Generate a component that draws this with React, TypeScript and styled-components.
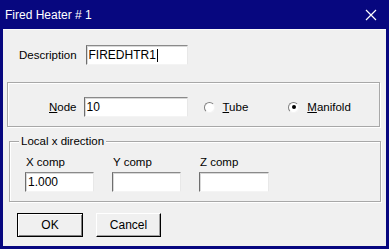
import React from 'react';
import styled, { createGlobalStyle } from 'styled-components';

const GlobalStyle = createGlobalStyle`
  html, body {
    margin: 0;
    padding: 0;
    background: #f0f0f0;
  }
  body {
    font-family: 'Liberation Sans', Arial, sans-serif;
    font-size: 11.5px;
    color: #000;
  }
`;

const Window = styled.div`
  width: 389px;
  height: 249px;
  display: flex;
  flex-direction: column;
  background: #07077f;
  box-sizing: border-box;
`;

const TitleBar = styled.div`
  height: 29px;
  flex: none;
  display: flex;
  align-items: center;
  justify-content: space-between;
  padding: 0 12px 0 5px;
  color: #fff;
  font-size: 12px;
`;

const Client = styled.div`
  flex: 1;
  margin: 0 3px 3px 3px;
  background: #f0f0f0;
  border-top: 1px solid #fafafa;
  display: flex;
  flex-direction: column;
  padding: 15px 6px 0 4px;
`;

const Row = styled.div<{ $indent?: number }>`
  display: flex;
  align-items: center;
  padding-left: ${({ $indent }) => $indent ?? 0}px;
`;

const Label = styled.span<{ $gap?: number }>`
  margin-right: ${({ $gap }) => $gap ?? 7}px;
  white-space: nowrap;
`;

const Field = styled.div<{ $w: number }>`
  width: ${({ $w }) => $w}px;
  height: 20px;
  box-sizing: border-box;
  background: #fff;
  border-top: 1px solid #8a8a8a;
  border-left: 1px solid #6e6e6e;
  border-right: 1px solid #e8e8e8;
  border-bottom: 1px solid #f4f4f4;
  box-shadow: inset 1px 1px 0 #d8d8d8;
  display: flex;
  align-items: center;
  padding-left: 2px;
  font-size: 12px;
`;

const Caret = styled.span`
  display: inline-block;
  width: 1px;
  height: 13px;
  background: #000;
  margin-left: 1px;
`;

const GroupBox = styled.div<{ $mt: number; $ml: number; $mr?: number }>`
  position: relative;
  margin-top: ${({ $mt }) => $mt}px;
  margin-left: ${({ $ml }) => $ml}px;
  margin-right: ${({ $mr }) => $mr ?? 0}px;
  border: 1px solid #a8a8a8;
  box-shadow: inset 1px 1px 0 #fff, 1px 1px 0 #fff;
`;

const NodeBody = styled.div`
  display: flex;
  align-items: center;
  padding: 14px 0 9px 41px;
`;

const Legend = styled.span`
  position: absolute;
  top: -8px;
  left: 9px;
  padding: 0 2px;
  background: #f0f0f0;
  line-height: 15px;
`;

const Radio = styled.label<{ $ml: number }>`
  display: flex;
  align-items: center;
  margin-left: ${({ $ml }) => $ml}px;
  gap: 8px;
`;

const RadioCircle = styled.span<{ $checked?: boolean }>`
  width: 11px;
  height: 11px;
  box-sizing: border-box;
  border-radius: 50%;
  border: 1px solid;
  border-color: #808080 #f4f4f4 #f4f4f4 #808080;
  background: #fff;
  display: flex;
  align-items: center;
  justify-content: center;
  &::after {
    content: '';
    width: 4px;
    height: 4px;
    border-radius: 50%;
    background: ${({ $checked }) => ($checked ? '#000' : 'transparent')};
  }
`;

const U = styled.span`
  text-decoration: underline;
`;

const CompGrid = styled.div`
  display: flex;
  gap: 18px;
  padding: 13px 0 9px 15px;
`;

const CompCol = styled.div`
  display: flex;
  flex-direction: column;
  gap: 3px;
`;

const CompLabel = styled.span`
  padding-left: 1px;
  line-height: 14px;
`;

const Buttons = styled.div`
  display: flex;
  gap: 13px;
  margin-top: 11px;
  padding-left: 10px;
`;

const Button = styled.div<{ $default?: boolean; $w: number }>`
  width: ${({ $w }) => $w}px;
  height: 24px;
  box-sizing: border-box;
  display: flex;
  align-items: center;
  justify-content: center;
  background: #f0f0f0;
  border: 1px solid ${({ $default }) => ($default ? '#000' : '#fff')};
  border-right-color: #000;
  border-bottom-color: #000;
  box-shadow: ${({ $default }) =>
    $default
      ? 'inset 1px 1px 0 #fff, inset -1px -1px 0 #808080'
      : 'inset -1px -1px 0 #a0a0a0'};
  font-size: 12px;
`;

const CloseIcon = () => (
  <svg width="12" height="12" viewBox="0 0 12 12">
    <path d="M1 1 L11 11 M11 1 L1 11" stroke="#fff" strokeWidth="1.2" />
  </svg>
);

export default function App() {
  return (
    <>
      <GlobalStyle />
      <Window>
        <TitleBar>
          <span>Fired Heater # 1</span>
          <CloseIcon />
        </TitleBar>
        <Client>
          <Row $indent={12}>
            <Label $gap={9}>Description</Label>
            <Field $w={102}>
              FIREDHTR1
              <Caret />
            </Field>
          </Row>

          <GroupBox $mt={17} $ml={0}>
            <NodeBody>
              <Label>
                <U>N</U>ode
              </Label>
              <Field $w={104}>10</Field>
              <Radio $ml={16}>
                <RadioCircle />
                <span>
                  <U>T</U>ube
                </span>
              </Radio>
              <Radio $ml={40}>
                <RadioCircle $checked />
                <span>
                  <U>M</U>anifold
                </span>
              </Radio>
            </NodeBody>
          </GroupBox>

          <GroupBox $mt={14} $ml={2} $mr={-1}>
            <Legend>Local x direction</Legend>
            <CompGrid>
              <CompCol>
                <CompLabel>X comp</CompLabel>
                <Field $w={69}>1.000</Field>
              </CompCol>
              <CompCol>
                <CompLabel>Y comp</CompLabel>
                <Field $w={69} />
              </CompCol>
              <CompCol>
                <CompLabel>Z comp</CompLabel>
                <Field $w={70} />
              </CompCol>
            </CompGrid>
          </GroupBox>

          <Buttons>
            <Button $default $w={66}>
              OK
            </Button>
            <Button $w={65}>Cancel</Button>
          </Buttons>
        </Client>
      </Window>
    </>
  );
}
